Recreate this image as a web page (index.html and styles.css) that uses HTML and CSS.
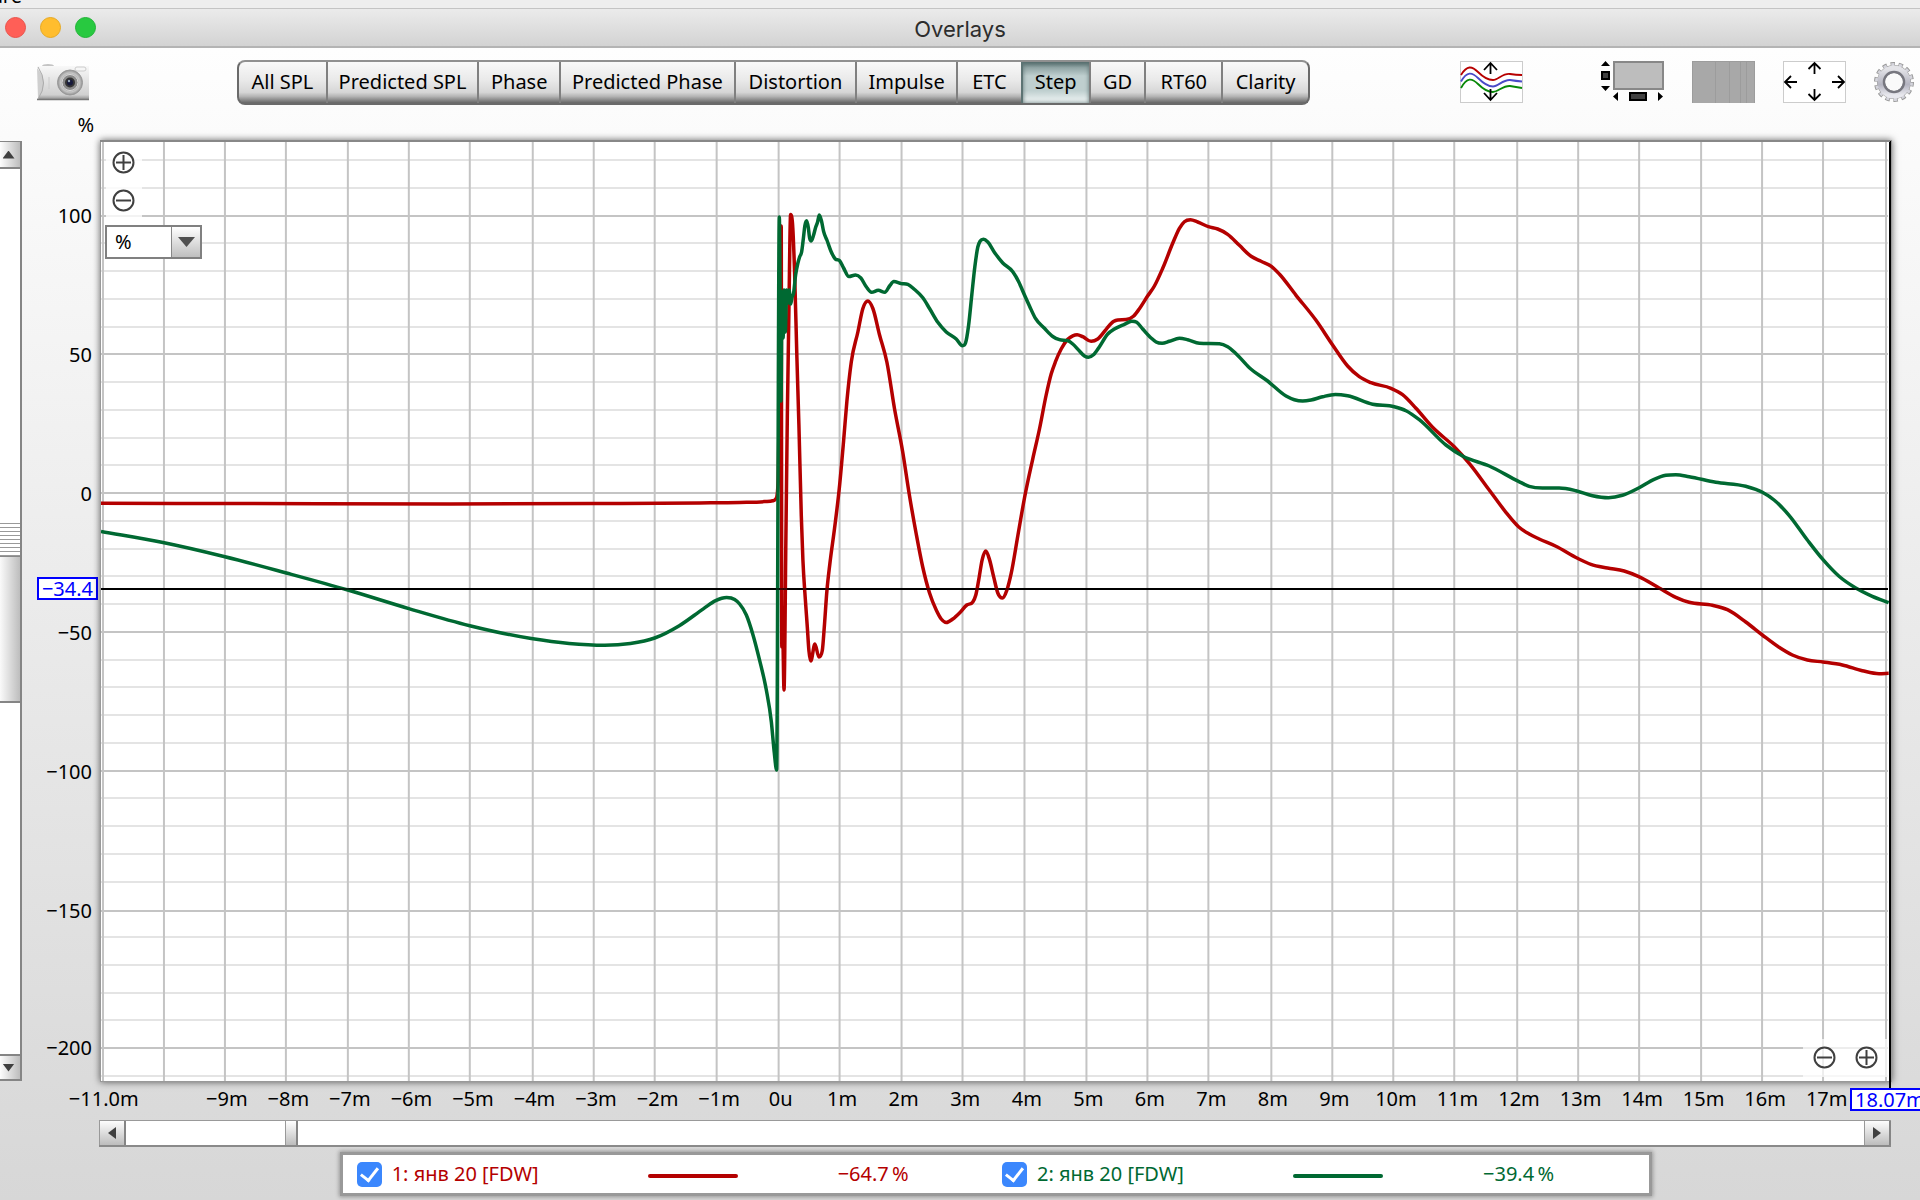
FILE: index.html
```html
<!DOCTYPE html>
<html lang="en">
<head>
<meta charset="utf-8">
<title>Overlays</title>
<link rel="stylesheet" href="styles.css">
</head>
<body>
<div class="app">
  <div class="back-window"><span class="back-title">are</span></div>
  <header class="titlebar">
    <div class="lights">
      <button class="light close" aria-label="Close"></button>
      <button class="light minimise" aria-label="Minimise"></button>
      <button class="light expand" aria-label="Expand"></button>
    </div>
    <h1 class="title">Overlays</h1>
  </header>

  <div class="toolbar">
    <button class="icon-button camera" aria-label="Capture graph">
      <svg width="52" height="38" viewBox="0 0 52 38">
        <defs>
          <linearGradient id="cam" x1="0" y1="0" x2="0" y2="1"><stop offset="0" stop-color="#f8f8f8"/><stop offset=".85" stop-color="#d0d0d0"/><stop offset="1" stop-color="#888"/></linearGradient>
          <radialGradient id="lens"><stop offset="0" stop-color="#555"/><stop offset=".5" stop-color="#777"/><stop offset=".75" stop-color="#c8c8c8"/><stop offset="1" stop-color="#929292"/></radialGradient>
        </defs>
        <ellipse cx="11" cy="3" rx="6" ry="2" fill="#c4c4c4"/>
        <path d="M0 3H52V37H0Q11 20 0 3Z" fill="url(#cam)"/>
        <path d="M0 5Q13 20 1 35Z" fill="#cfcfcf"/>
        <path d="M0 36.500H52" stroke="#777" stroke-width="1.500"/>
        <path d="M1 4Q12 20 1 36" fill="none" stroke="#aaa"/>
        <path d="M12 14V26" stroke="#ccc"/>
        <rect x="38" y="4" width="11" height="4" rx="2" fill="#f6f6f6" stroke="#ccc"/>
        <circle cx="33" cy="19.500" r="12.500" fill="url(#lens)" stroke="#999"/>
        <circle cx="33" cy="19.500" r="8" fill="#8a8a8a" stroke="#ddd"/>
        <circle cx="33" cy="19.500" r="5" fill="#333"/>
        <circle cx="33" cy="19.500" r="3" fill="#171a3c"/>
        <circle cx="32" cy="18" r="1.200" fill="#9ab"/>
      </svg>
    </button>

    <nav class="segments" aria-label="Graph type">
      <button class="segment">All SPL</button>
      <button class="segment">Predicted SPL</button>
      <button class="segment">Phase</button>
      <button class="segment">Predicted Phase</button>
      <button class="segment">Distortion</button>
      <button class="segment">Impulse</button>
      <button class="segment">ETC</button>
      <button class="segment selected" aria-pressed="true">Step</button>
      <button class="segment">GD</button>
      <button class="segment">RT60</button>
      <button class="segment">Clarity</button>
    </nav>

    <div class="tools">
      <button class="icon-button separate" aria-label="Separate traces">
        <svg width="63" height="42" viewBox="0 0 63 42" fill="none" stroke-width="1.800">
          <rect x=".5" y=".5" width="62" height="41" fill="#fff" stroke="#ccc" stroke-width="1"/>
          <path d="M1 14C7 4 12 5 18 11S28 19 33 19S43 12 50 13Q56 14 62 14" stroke="#b70000"/>
          <path d="M1 20.500C7 10 12 11 18 17S28 25.500 33 25.500S43 18.500 50 19Q56 20 62 20.500" stroke="#4a4ac8"/>
          <path d="M1 27C7 16 12 17 18 23S28 31 33 31S43 24.500 50 25Q56 26 62 27" stroke="#088808"/>
          <path d="M30.500 13V2M24 9L30.500 2L37 9M30.500 28V39M24 32L30.500 39L37 32" stroke="#000"/>
        </svg>
      </button>
      <button class="icon-button" aria-label="Toggle scrollbars">
        <svg width="64" height="42" viewBox="0 0 64 42">
          <rect x="14" y="1" width="49" height="27" fill="#bdbdbd" stroke="#888" stroke-width="2"/>
          <path d="M1 5L5.500 0L10 5ZM1 25H10L5.500 30ZM18 31V40L13 35.500ZM58 31V40L63 35.500Z"/>
          <rect x="2" y="11" width="7" height="7" fill="#404040" stroke="#000" stroke-width="2"/>
          <rect x="30" y="32" width="16" height="7" fill="#404040" stroke="#000" stroke-width="2"/>
        </svg>
      </button>
      <button class="icon-button" aria-label="Frequency axis">
        <svg width="63" height="42" viewBox="0 0 63 42">
          <rect width="63" height="42" fill="#a8a8a8"/>
          <path d="M23.500 0V42M37.500 0V42M48.500 0V42M54.500 0V42M.5 0V42M62.500 0V42M0 .5H63" stroke="#9c9c9c"/>
        </svg>
      </button>
      <button class="icon-button" aria-label="Graph limits">
        <svg width="63" height="42" viewBox="0 0 63 42">
          <rect x=".5" y=".5" width="62" height="41" fill="#fff" stroke="#ccc"/>
          <path d="M31.500 13V2M25.500 8L31.500 2L37.500 8M31.500 28V39M25.500 33L31.500 39L37.500 33M14 21H3M8 15L2 21L8 27M49 21H60M55 15L61 21L55 27" fill="none" stroke="#000" stroke-width="1.800"/>
        </svg>
      </button>
      <button class="icon-button" aria-label="Graph controls">
        <svg width="40" height="42" viewBox="0 0 40 42">
          <defs><linearGradient id="gear" x1="0" y1="0" x2="0" y2="1"><stop offset="0" stop-color="#e4e4e8"/><stop offset=".6" stop-color="#b4b4c0"/><stop offset="1" stop-color="#e8e8ee"/></linearGradient></defs>
          <g fill="none">
            <circle cx="20" cy="21" r="17" stroke="#999" stroke-width="6" stroke-dasharray="4.200 3.430"/>
            <circle cx="20" cy="21" r="13" stroke="#999" stroke-width="8"/>
            <circle cx="20" cy="21" r="17" stroke="#d4d4dc" stroke-width="4" stroke-dasharray="3 4.630" stroke-dashoffset="-.6"/>
            <circle cx="20" cy="21" r="13" stroke="url(#gear)" stroke-width="7"/>
            <circle cx="20" cy="21" r="10" stroke="#77777f" stroke-width="2.500"/>
          </g>
          <circle cx="20" cy="21" r="8.500" fill="#fafafa"/>
        </svg>
      </button>
    </div>
  </div>

  <main class="graph">
    <div class="unit">%</div>

    <div class="vscroll">
      <button class="step-button up" aria-label="Scroll up"></button>
      <div class="track-above"></div>
      <div class="grip"></div>
      <div class="vthumb"></div>
      <div class="track-below"></div>
      <button class="step-button down" aria-label="Scroll down"></button>
    </div>

    <div class="y-axis">
      <span class="y1">100</span>
      <span class="y2">50</span>
      <span class="y3">0</span>
      <span class="y4">−50</span>
      <span class="y5">−100</span>
      <span class="y6">−150</span>
      <span class="y7">−200</span>
      <output class="cursor-value y-value">−34.4</output>
    </div>

    <div class="plot">
      <svg class="chart" viewBox="101 141 1790 940" preserveAspectRatio="none" role="img" aria-label="Step response">
        <path id="minor" class="minor"/>
        <path id="major" class="major"/>
        <path class="cursor-line" d="M101 589H1889"/>
        <path id="trace1" class="trace red"/>
        <path id="trace2" class="trace green"/>
        <path class="cursor-line faint" d="M101 589H1889"/>
      </svg>
      <div class="vertical-zoom">
        <button class="zoom" aria-label="Zoom in vertically"><svg width="23" height="23" viewBox="0 0 23 23"><circle cx="11.500" cy="11.500" r="10"/><path d="M4 11.500H19M11.500 4V19"/></svg></button>
        <button class="zoom" aria-label="Zoom out vertically"><svg width="23" height="23" viewBox="0 0 23 23"><circle cx="11.500" cy="11.500" r="10"/><path d="M4 11.500H19"/></svg></button>
      </div>
      <label class="unit-picker"><select aria-label="Unit"><option>%</option></select></label>
      <div class="horizontal-zoom">
        <button class="zoom" aria-label="Zoom out horizontally"><svg width="23" height="23" viewBox="0 0 23 23"><circle cx="11.500" cy="11.500" r="10"/><path d="M4 11.500H19"/></svg></button>
        <button class="zoom" aria-label="Zoom in horizontally"><svg width="23" height="23" viewBox="0 0 23 23"><circle cx="11.500" cy="11.500" r="10"/><path d="M4 11.500H19M11.500 4V19"/></svg></button>
      </div>
    </div>

    <div class="x-axis">
      <span>−11.0m</span><span></span><span>−9m</span><span>−8m</span><span>−7m</span><span>−6m</span><span>−5m</span><span>−4m</span><span>−3m</span><span>−2m</span><span>−1m</span><span>0u</span><span>1m</span><span>2m</span><span>3m</span><span>4m</span><span>5m</span><span>6m</span><span>7m</span><span>8m</span><span>9m</span><span>10m</span><span>11m</span><span>12m</span><span>13m</span><span>14m</span><span>15m</span><span>16m</span><span>17m</span><span></span>
      <output class="cursor-value x-value">18.07m</output>
    </div>

    <div class="hscroll">
      <button class="step-button left" aria-label="Scroll left"></button>
      <div class="track-before"></div>
      <div class="hthumb"></div>
      <div class="track-after"></div>
      <button class="step-button right" aria-label="Scroll right"></button>
    </div>

    <div class="legend">
      <div class="entry red-text">
        <input type="checkbox" id="m1" checked>
        <label for="m1">1: янв 20 [FDW]</label>
        <span class="sample"></span>
        <span class="reading">−64.7&#8201;%</span>
      </div>
      <div class="entry green-text">
        <input type="checkbox" id="m2" checked>
        <label for="m2">2: янв 20 [FDW]</label>
        <span class="sample"></span>
        <span class="reading">−39.4&#8201;%</span>
      </div>
    </div>
  </main>
</div>
<script src="chart.js"></script>
</body>
</html>
```
FILE: styles.css
```css
* { box-sizing: border-box; }

body {
  margin: 0;
  font-family: "Noto Sans", sans-serif;
  font-size: 20px;
  line-height: 24px;
  color: #000;
}

button, select, input { margin: 0; font: inherit; color: inherit; }

button { padding: 0; border: 0; background: none; }

.app {
  display: flex;
  flex-direction: column;
  min-height: 100vh;
  overflow: hidden;
  background: linear-gradient(#fefefe 48px, #ebebeb 50%, #d7d7d7);
}

.back-window {
  display: flex;
  height: 9px;
  overflow: hidden;
  background: #eee;
  border-bottom: 1px solid #c4c4c4;
}

.back-title {
  display: flex;
  justify-content: flex-end;
  align-items: flex-end;
  width: 22px;
}

.titlebar {
  display: grid;
  grid-template-columns: 1fr auto 1fr;
  align-items: center;
  height: 39px;
  padding: 0 5px;
  background: linear-gradient(#ebebeb, #d3d3d3);
  border-bottom: 2px solid #b4b4b4;
}

.lights { display: flex; gap: 14px; }

.light { width: 21px; height: 21px; border-radius: 50%; }
.close { background: #ff5f57; border: 1px solid #e9524a; }
.minimise { background: #ffbd2e; border: 1px solid #e6a923; }
.expand { background: #28c940; border: 1px solid #20b436; }

.title {
  margin: 0;
  padding-top: 2px;
  font-family: Inter, sans-serif;
  font-size: 22px;
  font-weight: 400;
  color: #2d2d2d;
}

.toolbar {
  display: flex;
  align-items: center;
  height: 68px;
  padding: 0 6px 0 37px;
}

.icon-button { display: block; flex: none; }
.icon-button svg { display: block; }
.camera { margin-right: 148px; }

.segments {
  display: grid;
  grid-template-columns: 87fr 152fr 82fr 175fr 122fr 101fr 65fr 68fr 56fr 77fr 87fr;
  flex: 0 1 1073px;
  height: 45px;
  overflow: hidden;
  border: 2px solid #6a6a6a;
  border-top-color: #909090;
  border-radius: 8px;
  background: linear-gradient(#f9f9f9, #e9e9e9 45%, #d6d6d6 74%, #b4b4b4 84%, #666);
}

.segment { border-left: 2px solid #808080; white-space: nowrap; }
.segment:first-child { border-left: 0; }

.selected {
  border-left-color: #5d7474;
  background: linear-gradient(#536b6b, #91a5a5 14%, #bfcfcf 34%, #bfcfcf 70%, #f4f8f8);
  box-shadow: inset 0 0 4px #5d7474;
}

.tools { display: flex; gap: 28px; margin-left: auto; }
.separate { margin-right: 49px; }

.graph {
  display: grid;
  flex: 1;
  grid-template-columns: 22px 79px minmax(0, 1fr) 29px;
  grid-template-rows: 25px minmax(600px, 1fr) 39px 27px 53px;
}

.unit {
  grid-column: 2;
  grid-row: 1;
  margin: -3px 7px 0 0;
  text-align: right;
}

.vscroll {
  grid-column: 1;
  grid-row: 2;
  display: flex;
  flex-direction: column;
  background: #fff;
  border-right: 2px solid #858585;
  border-top: 1px solid #858585;
}

.step-button {
  display: grid;
  place-items: center;
  flex: none;
  background: linear-gradient(#fdfdfd, #bdbdbd);
  border: 1px solid #999;
  border-right: 2px solid #858585;
  border-bottom: 2px solid #858585;
}

.step-button::after { content: ""; background: #404040; }
.up, .down { height: 27px; padding-right: 3px; border-width: 0 0 2px; background: linear-gradient(90deg, #fdfdfd, #bdbdbd); }
.down { border-top: 2px solid #858585; }
.left, .right { width: 27px; }
.up::after, .down::after { width: 12px; height: 8px; }
.left::after, .right::after { width: 8px; height: 12px; }
.up::after { clip-path: polygon(50% 0, 100% 100%, 0 100%); }
.down::after { clip-path: polygon(0 0, 100% 0, 50% 100%); }
.left::after { clip-path: polygon(100% 0, 100% 100%, 0 50%); }
.right::after { clip-path: polygon(0 0, 100% 50%, 0 100%); }

.track-above { flex: 355; }
.track-below { flex: 352; }
.grip { flex: 0 0 34px; background: repeating-linear-gradient(#999 0 1px, #fff 1px 4px); border-bottom: 1px solid #888; }
.vthumb { flex: 145; background: linear-gradient(90deg, #fafafa, #bdbdbd); border-bottom: 2px solid #858585; }

.y-axis {
  position: relative;
  grid-column: 2;
  grid-row: 2;
  display: grid;
  grid-template-rows: 5fr 139fr 139fr 139fr 139fr 139fr 139fr 35fr 66fr;
  align-items: center;
  padding-right: 9px;
  text-align: right;
}

.y1 { grid-row: 2; }
.y2 { grid-row: 3; }
.y3 { grid-row: 4; }
.y4 { grid-row: 5; }
.y5 { grid-row: 6; }
.y6 { grid-row: 7; }
.y7 { grid-row: 9; }

.cursor-value {
  position: absolute;
  padding: 0 3px;
  line-height: 19px;
  color: #00f;
  background: #fff;
  border: 2px solid #00f;
}

.y-value { right: 3px; top: 46.4%; }
.x-value { left: calc(100% - 69px); top: 7px; z-index: 2; }

.plot {
  position: relative;
  grid-column: 3;
  grid-row: 2;
  min-height: 0;
  background: #fff;
  border-right: 1px solid #000;
  box-shadow: 0 0 0 1px #999, 0 0 7px 1px rgba(0, 0, 0, .6);
}

.plot::before {
  content: "";
  position: absolute;
  inset: -1px 0 auto -1px;
  height: 2px;
  background: #888;
  z-index: 1;
}

.plot::after {
  content: "";
  position: absolute;
  top: 0;
  right: -1px;
  bottom: -7px;
  width: 2px;
  background: #000;
}

.chart { position: absolute; width: 100%; height: 100%; }
.chart path { fill: none; vector-effect: non-scaling-stroke; }
.chart .minor { stroke: #e4e4e4; stroke-width: 2; }
.chart .major { stroke: #c4c4c4; stroke-width: 2; }
.chart .cursor-line { stroke: #000; stroke-width: 2; }
.chart .faint { opacity: .6; }
.chart .trace { stroke-width: 3.5; stroke-linejoin: round; }
.chart .red { stroke: #b40000; }
.chart .green { stroke: #006932; }

.vertical-zoom {
  position: absolute;
  left: 5px;
  top: 5px;
  display: flex;
  flex-direction: column;
  gap: 15px;
  width: 36px;
  padding: 5px 6px 6px;
  background: rgba(255, 255, 255, .8);
}

.horizontal-zoom {
  position: absolute;
  right: 2px;
  bottom: 4px;
  display: flex;
  gap: 19px;
  padding: 7px 10px 8px;
  background: rgba(255, 255, 255, .7);
}

.zoom svg { display: block; fill: none; stroke: #404040; stroke-width: 2; }

.unit-picker {
  position: absolute;
  left: 4px;
  top: 84px;
  width: 97px;
  height: 34px;
  background: #fff;
  border: 2px solid #808080;
}

.unit-picker select {
  width: 100%;
  height: 100%;
  padding: 0 8px;
  appearance: none;
  border: 0;
  border-radius: 0;
  background: linear-gradient(#fff, #bfbfbf) right / 28px 100% no-repeat;
}

.unit-picker::before {
  content: "";
  position: absolute;
  right: 28px;
  top: 0;
  width: 1px;
  height: 100%;
  background: #888;
}

.unit-picker::after {
  content: "";
  position: absolute;
  right: 5px;
  top: 10px;
  width: 17px;
  height: 10px;
  background: #505050;
  clip-path: polygon(0 0, 100% 0, 50% 100%);
}

.x-axis {
  position: relative;
  grid-column: 3;
  grid-row: 3;
  display: grid;
  grid-template-columns: repeat(30, minmax(0, 1fr));
  margin: 0 -28px;
  padding-top: 6px;
}

.x-axis span { display: flex; justify-content: center; white-space: nowrap; }

.hscroll {
  grid-column: 3;
  grid-row: 4;
  display: flex;
  margin-left: -2px;
  background: #fff;
  border-top: 1px solid #999;
  border-bottom: 2px solid #8a8a8a;
}

.hscroll .step-button { border-top: 0; border-bottom: 0; }

.track-before { flex: 159; }
.track-after { flex: 1566; }
.hthumb { width: 13px; background: linear-gradient(#fff, #bdbdbd); border-left: 1px solid #999; border-right: 2px solid #858585; }

.legend {
  grid-column: 3;
  grid-row: 5;
  display: grid;
  grid-template-columns: 1fr 1fr;
  justify-self: center;
  width: 73%;
  height: 38px;
  margin-top: 8px;
  padding: 0 2px 0 14px;
  background: #fff;
  box-shadow: 0 0 0 3px #999, 0 0 4px 4px rgba(0, 0, 0, .3);
}

.entry { display: grid; grid-template-columns: 35px 256px 90px 1fr; align-items: center; }
.red-text { color: #b40000; }
.green-text { color: #006932; }

.entry input {
  display: grid;
  place-items: center;
  width: 25px;
  height: 25px;
  appearance: none;
  border-radius: 5px;
  background: #3b87fd;
}

.entry input::after {
  content: "";
  width: 8px;
  height: 14px;
  margin-top: -4px;
  border: solid #fff;
  border-width: 0 3px 3px 0;
  transform: rotate(38deg);
}

.sample { height: 4px; margin-top: 3px; border-radius: 2px; background: currentColor; }
.reading { padding-left: 100px; white-space: nowrap; }
```
FILE: chart.js
```js
const gridX = [103, 164, 225, 286, 348, 409, 470, 533, 594, 655, 717, 779, 840, 902, 963, 1025, 1087, 1148, 1209, 1272, 1333, 1394, 1455, 1518, 1579, 1640, 1702, 1763, 1824, 1887];
const gridY = [216, 354, 493, 632, 771, 911, 1048];

let minor = "";
for (let v = 120; v >= -210; v -= 10) {
  if (v % 50 !== 0) minor += `M101 ${Math.round(493 - v * 2.775)}H1889`;
}
document.getElementById("minor").setAttribute("d", minor);
document.getElementById("major").setAttribute("d",
  gridX.map(x => `M${x} 141V1081`).join("") + gridY.map(y => `M101 ${y}H1889`).join(""));

const red = `101,503.3 250,503.6 450,504 600,503.5 700,502.9 740,502.4 765,501.6 773,500.8 776,499 777.5,495 778.5,480
781.6,226 782.2,647 783,630 784.4,690 786.3,536 787.7,417 789.3,310 791,214.5 793.2,228 795,273 797.3,358 799.3,425 801.7,516 803.3,560
805.7,599 807.7,627 809.3,650.5 811.2,661 815.3,644 819.3,657 822.7,650.5 824.7,627 827.3,591 830.3,563.5
835,528 839.7,488.4 844,441 847.3,401.4 851.7,362 858.3,332 863.3,308.5 868.3,301 873.3,308.5 880,335 887.3,362 895,409 903,451
910,496 916.7,534 923.3,567.5 930,593 936.7,610 941.7,619 946.7,622.5 953.3,619 960,613 967.3,605 973.3,602 976.3,595 979.3,579.4
982.7,559.6 986.3,551 990,559.6 994.3,577.4 998.3,593 1003,598 1007.3,590.4 1011.7,573.4 1018.3,536 1025,498 1033.3,458.8
1040,429 1046.7,395 1051.7,374 1056,361.7 1061.7,349 1068.3,339.3 1073.3,335.8 1077.7,334.7 1083.3,336.7 1091.7,341.3 1098.3,339
1106.7,329.3 1114,321.5 1118.3,319.9 1126.7,319.6 1134,316.3 1140,308.7 1148,296.3 1155,286 1163.3,268.3 1173.3,243.3 1180,228.3
1185,221.7 1191,219.7 1198.3,222 1209,226.7 1218.3,229 1228.3,234.3 1240,245.3 1251.7,256.3 1261.7,261.3 1272,266.3 1280,274
1296.7,295.3 1316.7,320.3 1333.3,345 1348.3,366 1360,376.7 1371.7,382.7 1391.7,388.3 1403.3,394.7 1416.7,408.3 1433.3,427.3
1455,446.7 1470,463.3 1490,490 1506.7,512.3 1519.3,526.7 1530,534 1540,539 1556.7,546.3 1578.3,558.3 1591.7,564.3 1608.3,568
1625,571 1639.7,576.7 1660,588 1676.7,597.3 1690,602.3 1713.3,605.3 1728.3,609.7 1746.7,622 1763.3,635 1780,647.3 1793.3,655
1808.3,660 1824,662 1843.3,665 1863.3,670.7 1880,673.7 1889.7,673.3`;

const green = `101,531.5 163,542.5 224,556.5 286.5,573 348,590 409,608.6 470,625.7 531.5,638.6 569.4,643.5 605,645.3 630.6,643.5
655,638 679.6,625.7 704,608.6 716,600.6 727,597.5 735,599.5 740,604 746.7,615 753.3,634.7 760,660.4 766.7,690 771.7,721.7 774.7,753
777,770 779.7,217 781.4,401 782.4,292 783.5,338 784.4,290 785.7,332 787,290 788,303 789.5,290 791,304 792.5,297 794,293 796,275
798.3,263 800,257 802,252 803.7,239 805.3,225.5 807,220.7 808.7,227.5 810,238 811.7,241 814,235 816,227.5 818,222 819.7,215
822,221.5 824,231.4 827.3,240 831.7,252 835.7,259 840,260.7 844,268 849.3,276.5 856,275 861.3,278 866.7,286.8 872,292.3
878.7,290.3 885.3,292.3 890,286 894.3,281.6 901.7,283.6 908.3,284.4 915,289.5 923.3,297.8 930,308.5 938.3,322.3 946.7,332
956.7,339 963,345.7 966,343 969,326 972.3,294.7 975.3,267 978.3,247 980.7,241 984,239.3 988.3,242 995,252.4 1003.3,263
1013.3,271.7 1019.3,282 1025,295 1030,306 1036,318.4 1045,328.3 1053.3,336.5 1060,339.7 1068.3,340.7 1073.3,344 1080,351
1085,356 1089,357.3 1094,354.7 1100,346.7 1108.3,334 1115,329 1125,324.3 1132.3,321.3 1137.3,322.3 1143.3,329 1151.7,338
1156.7,342 1162.7,343.3 1170,341.3 1180,338.3 1188.3,339.7 1200,343.3 1220,343.7 1228.3,346.7 1236.7,353.7 1250,367.7
1268.3,381 1286.7,396 1295,399.7 1303.3,401 1311.7,400 1323.3,396.8 1336,394.5 1348.3,395.8 1373.3,404.2 1395,406.7
1406.7,410.7 1420,419.7 1446.7,445 1463.3,456 1490,466 1519.3,481.3 1530,486.3 1543.3,488 1560,488 1576.7,490.7 1593.3,495.7
1609.3,497.7 1623.3,495.3 1640,487.7 1655,479.3 1666.7,475.3 1676.7,474.7 1690,476.7 1716.7,482.3 1746.7,486.3 1763.3,492.3
1775,500 1790,515.3 1808.3,540 1824,559.7 1840,576.3 1856.7,588 1873.3,596.3 1889.7,602.7`;

// Monotone cubic interpolation: smooth, without overshooting the peaks.
function curve(text) {
  const p = text.trim().split(/\s+/).map(s => s.split(",").map(Number));
  const width = i => p[i + 1][0] - p[i][0];
  const slope = i => (p[i + 1][1] - p[i][1]) / width(i);
  const tangent = p.map((_, i) => {
    if (i === 0) return slope(0);
    if (i === p.length - 1) return slope(i - 1);
    const a = slope(i - 1), b = slope(i);
    if (a * b <= 0) return 0;
    const mean = (a * width(i) + b * width(i - 1)) / (width(i - 1) + width(i));
    return Math.sign(a) * Math.min(3 * Math.abs(a), 3 * Math.abs(b), Math.abs(mean));
  });
  let d = `M${p[0]}`;
  for (let i = 0; i < p.length - 1; i++) {
    const h = width(i) / 3;
    d += `C${p[i][0] + h} ${p[i][1] + tangent[i] * h} ${p[i + 1][0] - h} ${p[i + 1][1] - tangent[i + 1] * h} ${p[i + 1][0]} ${p[i + 1][1]}`;
  }
  return d;
}

document.getElementById("trace1").setAttribute("d", curve(red));
document.getElementById("trace2").setAttribute("d", curve(green));
```
